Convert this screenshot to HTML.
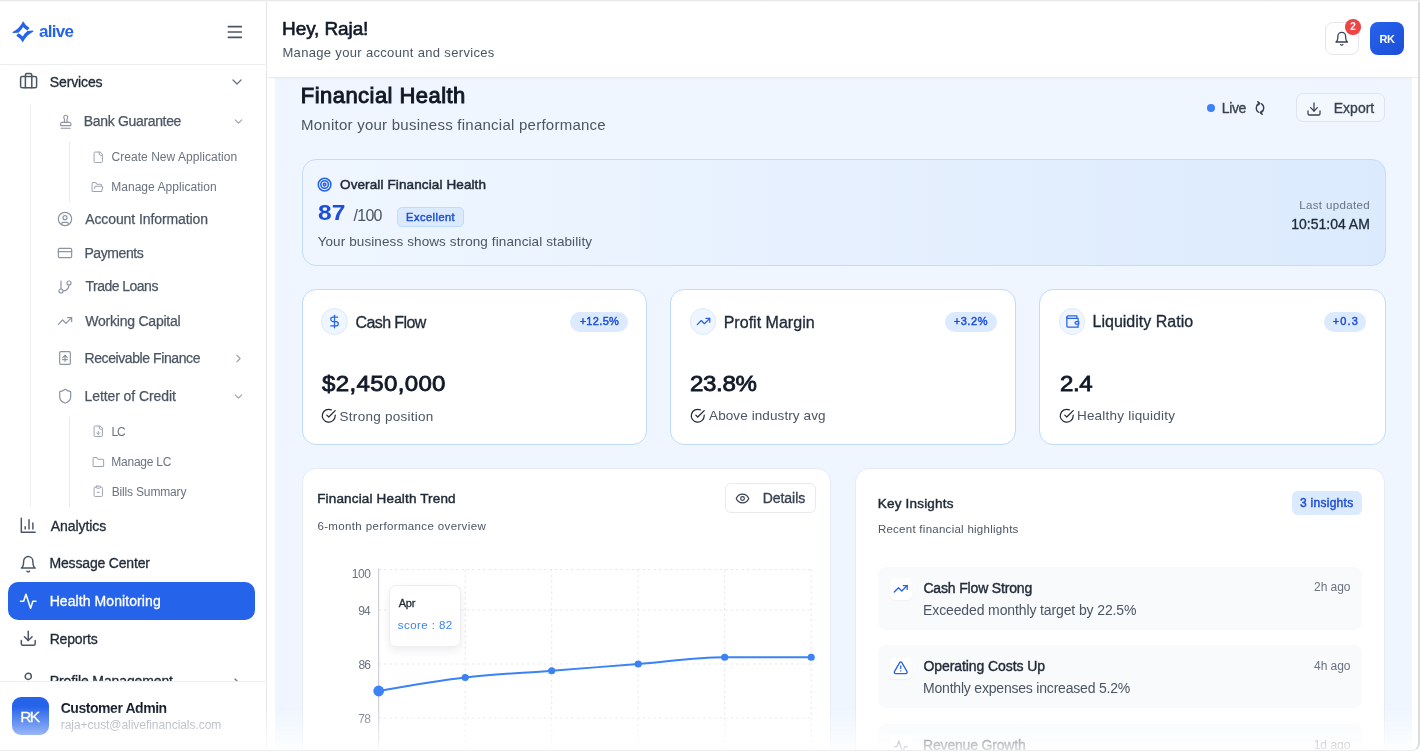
<!DOCTYPE html>
<html lang="en"><head><meta charset="utf-8"><title>Financial Health</title><style>
*{margin:0;padding:0;box-sizing:border-box}
html,body{width:1420px;height:754px;overflow:hidden;background:#fff}
body{position:relative;font-family:"Liberation Sans",Arial,sans-serif;-webkit-font-smoothing:antialiased}
.b{position:absolute}
.i{position:absolute;overflow:visible}
.t{position:absolute;white-space:nowrap;line-height:1}
#tx{position:absolute;left:0;top:0;width:1420px;height:754px;will-change:transform;z-index:5}
</style></head><body>
<div class="b" style="left:275.00px;top:78.30px;width:1136.50px;height:675.70px;background:#eff6ff;"></div>
<div class="b" style="left:267.50px;top:0.00px;width:1150.50px;height:78.00px;background:#fff;border-bottom:1px solid #e8ebef;box-shadow:0 1px 2px rgba(0,0,0,.03);"></div>
<div class="b" style="left:1325.00px;top:21.60px;width:34.00px;height:33.80px;background:#fff;border:1px solid #e5e7eb;border-radius:8px;"></div>
<svg class="i" style="left:1333.85px;top:30.85px" width="15.5" height="15.5" viewBox="0 0 24 24" fill="none" stroke="#374151" stroke-width="2" stroke-linecap="round" stroke-linejoin="round"><path d="M6 8a6 6 0 0 1 12 0c0 7 3 9 3 9H3s3-2 3-9"/><path d="M10.300 21a1.940 1.940 0 0 0 3.400 0"/></svg>
<div class="b" style="left:1345.20px;top:19.20px;width:15.60px;height:15.60px;background:#ef4444;border-radius:50%;"></div>
<div class="b" style="left:1370.00px;top:21.60px;width:34.00px;height:33.80px;background:linear-gradient(135deg,#2563eb,#1d4ed8);border-radius:8px;"></div>
<div class="b" style="left:1207.10px;top:104.30px;width:7.80px;height:7.80px;background:#3b82f6;border-radius:50%;"></div>
<svg class="i" style="left:1252.7px;top:101.1px" width="14" height="14" viewBox="-7 -7 14 14" fill="none" stroke="#374151" stroke-width="1.35" stroke-linecap="round" stroke-linejoin="round"><path d="M-1.56,4.17 A3.7,4.6 0 0 1 -0.51,-4.56"/><path d="M1.56,-4.17 A3.7,4.6 0 0 1 0.51,4.56"/><path d="M-2.31,-6.36 L-0.11,-4.56 L-2.31,-2.76"/><path d="M2.31,2.76 L0.11,4.56 L2.31,6.36"/></svg>
<div class="b" style="left:1296.00px;top:93.20px;width:88.60px;height:29.20px;border:1px solid #dfe5ee;border-radius:7px;background:rgba(255,255,255,.25);"></div>
<svg class="i" style="left:1305.70px;top:100.50px" width="16" height="16" viewBox="0 0 24 24" fill="none" stroke="#374151" stroke-width="1.9" stroke-linecap="round" stroke-linejoin="round"><path d="M21 15v4a2 2 0 0 1-2 2H5a2 2 0 0 1-2-2v-4"/><polyline points="7 10 12 15 17 10"/><line x1="12" x2="12" y1="15" y2="3"/></svg>
<div class="b" style="left:301.60px;top:158.70px;width:1084.00px;height:107.50px;border:1px solid #c4dcfd;border-radius:14px;background:linear-gradient(90deg,#eff6ff 0%,#e6f0fe 50%,#dbeafe 100%);"></div>
<svg class="i" style="left:317.40px;top:177.00px" width="15.2" height="15.2" viewBox="0 0 24 24" fill="none" stroke="#2563eb" stroke-width="2.5" stroke-linecap="round" stroke-linejoin="round"><circle cx="12" cy="12" r="10"/><circle cx="12" cy="12" r="6"/><circle cx="12" cy="12" r="2"/></svg>
<div class="b" style="left:397.00px;top:207.40px;width:66.60px;height:20.00px;border:1px solid #bfdbfe;border-radius:5px;background:#dbeafe;"></div>
<div class="b" style="left:301.60px;top:288.70px;width:345.70px;height:155.90px;border:1px solid #bfdbfe;border-radius:14px;background:#fff;"></div>
<div class="b" style="left:321.00px;top:308.40px;width:26.60px;height:26.60px;border:1px solid #dbeafe;border-radius:50%;background:#eff6ff;"></div>
<svg class="i" style="left:326.80px;top:314.20px" width="15" height="15" viewBox="0 0 24 24" fill="none" stroke="#2563eb" stroke-width="2" stroke-linecap="round" stroke-linejoin="round"><line x1="12" x2="12" y1="2" y2="22"/><path d="M17 5H9.500a3.500 3.500 0 0 0 0 7h5a3.500 3.500 0 0 1 0 7H6"/></svg>
<div class="b" style="left:569.80px;top:311.70px;width:58.00px;height:20.10px;border-radius:10px;background:#dbeafe;"></div>
<svg class="i" style="left:321.05px;top:408.25px" width="15.5" height="15.5" viewBox="0 0 24 24" fill="none" stroke="#1f2937" stroke-width="1.9" stroke-linecap="round" stroke-linejoin="round"><path d="M22 11.080V12a10 10 0 1 1-5.930-9.140"/><path d="m9 11 3 3L22 4"/></svg>
<div class="b" style="left:670.40px;top:288.70px;width:346.10px;height:155.90px;border:1px solid #bfdbfe;border-radius:14px;background:#fff;"></div>
<div class="b" style="left:689.80px;top:308.40px;width:26.60px;height:26.60px;border:1px solid #dbeafe;border-radius:50%;background:#eff6ff;"></div>
<svg class="i" style="left:695.60px;top:314.20px" width="15" height="15" viewBox="0 0 24 24" fill="none" stroke="#2563eb" stroke-width="2" stroke-linecap="round" stroke-linejoin="round"><polyline points="22 7 13.5 15.5 8.5 10.5 2 17"/><polyline points="16 7 22 7 22 13"/></svg>
<div class="b" style="left:945.00px;top:311.70px;width:51.80px;height:20.10px;border-radius:10px;background:#dbeafe;"></div>
<svg class="i" style="left:689.85px;top:408.25px" width="15.5" height="15.5" viewBox="0 0 24 24" fill="none" stroke="#1f2937" stroke-width="1.9" stroke-linecap="round" stroke-linejoin="round"><path d="M22 11.080V12a10 10 0 1 1-5.930-9.140"/><path d="m9 11 3 3L22 4"/></svg>
<div class="b" style="left:1039.40px;top:288.70px;width:346.20px;height:155.90px;border:1px solid #bfdbfe;border-radius:14px;background:#fff;"></div>
<div class="b" style="left:1058.80px;top:308.40px;width:26.60px;height:26.60px;border:1px solid #dbeafe;border-radius:50%;background:#eff6ff;"></div>
<svg class="i" style="left:1064.60px;top:314.20px" width="15" height="15" viewBox="0 0 24 24" fill="none" stroke="#2563eb" stroke-width="2" stroke-linecap="round" stroke-linejoin="round"><path d="M21 12V7H5a2 2 0 0 1 0-4h14v4"/><path d="M3 5v14a2 2 0 0 0 2 2h16v-5"/><path d="M18 12a2 2 0 0 0 0 4h4v-4Z"/></svg>
<div class="b" style="left:1324.00px;top:311.70px;width:42.00px;height:20.10px;border-radius:10px;background:#dbeafe;"></div>
<svg class="i" style="left:1058.85px;top:408.25px" width="15.5" height="15.5" viewBox="0 0 24 24" fill="none" stroke="#1f2937" stroke-width="1.9" stroke-linecap="round" stroke-linejoin="round"><path d="M22 11.080V12a10 10 0 1 1-5.930-9.140"/><path d="m9 11 3 3L22 4"/></svg>
<div class="b" style="left:301.60px;top:467.60px;width:529.90px;height:362.40px;border:1px solid #e6ecf5;border-radius:14px;background:#fff;"></div>
<div class="b" style="left:855.00px;top:467.60px;width:530.30px;height:362.40px;border:1px solid #e6ecf5;border-radius:14px;background:#fff;"></div>
<div class="b" style="left:725.00px;top:483.00px;width:90.60px;height:30.00px;border:1px solid #e8eaee;border-radius:6px;background:#fff;"></div>
<svg class="i" style="left:735.30px;top:491.10px" width="15" height="15" viewBox="0 0 24 24" fill="none" stroke="#374151" stroke-width="1.9" stroke-linecap="round" stroke-linejoin="round"><path d="M2 12s3-7 10-7 10 7 10 7-3 7-10 7-10-7-10-7Z"/><circle cx="12" cy="12" r="3"/></svg>
<svg class="i" style="left:0;top:0" width="1420" height="754" viewBox="0 0 1420 754" fill="none"><line x1="378.7" x2="811.2" y1="569.50" y2="569.50" stroke="#e6e9ee" stroke-width="1" stroke-dasharray="2.500 3"/><line x1="378.7" x2="811.2" y1="610.00" y2="610.00" stroke="#e6e9ee" stroke-width="1" stroke-dasharray="2.500 3"/><line x1="378.7" x2="811.2" y1="664.00" y2="664.00" stroke="#e6e9ee" stroke-width="1" stroke-dasharray="2.500 3"/><line x1="378.7" x2="811.2" y1="718.00" y2="718.00" stroke="#e6e9ee" stroke-width="1" stroke-dasharray="2.500 3"/><line x1="465.2" x2="465.2" y1="569.5" y2="760" stroke="#e6e9ee" stroke-width="1" stroke-dasharray="2.500 3"/><line x1="551.7" x2="551.7" y1="569.5" y2="760" stroke="#e6e9ee" stroke-width="1" stroke-dasharray="2.500 3"/><line x1="638.2" x2="638.2" y1="569.5" y2="760" stroke="#e6e9ee" stroke-width="1" stroke-dasharray="2.500 3"/><line x1="724.7" x2="724.7" y1="569.5" y2="760" stroke="#e6e9ee" stroke-width="1" stroke-dasharray="2.500 3"/><line x1="811.2" x2="811.2" y1="569.5" y2="760" stroke="#e6e9ee" stroke-width="1" stroke-dasharray="2.500 3"/><line x1="378.7" x2="378.7" y1="568.5" y2="760" stroke="#c3c7ce" stroke-width="1"/><path d="M378.70,691.00C407.53,685.94 436.37,680.88 465.20,677.50C494.03,674.12 522.87,673.00 551.70,670.75C580.53,668.50 609.37,666.25 638.20,664.00C667.03,661.75 695.87,657.25 724.70,657.25C753.53,657.25 782.37,657.25 811.20,657.25" stroke="#3b82f6" stroke-width="2"/><circle cx="378.7" cy="691.00" r="5.4" fill="#3b82f6"/><circle cx="465.2" cy="677.50" r="3.6" fill="#3b82f6"/><circle cx="551.7" cy="670.75" r="3.6" fill="#3b82f6"/><circle cx="638.2" cy="664.00" r="3.6" fill="#3b82f6"/><circle cx="724.7" cy="657.25" r="3.6" fill="#3b82f6"/><circle cx="811.2" cy="657.25" r="3.6" fill="#3b82f6"/></svg>
<div class="b" style="left:388.70px;top:585.20px;width:72.50px;height:61.40px;background:#fff;border:1px solid #eceef2;border-radius:7px;box-shadow:0 4px 10px rgba(0,0,0,.07);"></div>
<div class="b" style="left:1291.60px;top:491.00px;width:70.00px;height:24.40px;border-radius:6px;background:#dbeafe;"></div>
<div class="b" style="left:878.40px;top:566.60px;width:483.20px;height:63.00px;border-radius:8px;background:#f8fafc;"></div>
<div class="b" style="left:889.60px;top:577.70px;width:22.20px;height:22.20px;border-radius:5px;background:#fff;box-shadow:0 1px 2px rgba(0,0,0,.04);"></div>
<svg class="i" style="left:892.95px;top:581.05px" width="15.5" height="15.5" viewBox="0 0 24 24" fill="none" stroke="#2563eb" stroke-width="2" stroke-linecap="round" stroke-linejoin="round"><polyline points="22 7 13.5 15.5 8.5 10.5 2 17"/><polyline points="16 7 22 7 22 13"/></svg>
<div class="b" style="left:878.40px;top:645.40px;width:483.20px;height:63.00px;border-radius:8px;background:#f8fafc;"></div>
<div class="b" style="left:889.60px;top:656.50px;width:22.20px;height:22.20px;border-radius:5px;background:#fff;box-shadow:0 1px 2px rgba(0,0,0,.04);"></div>
<svg class="i" style="left:892.95px;top:659.85px" width="15.5" height="15.5" viewBox="0 0 24 24" fill="none" stroke="#2563eb" stroke-width="2" stroke-linecap="round" stroke-linejoin="round"><path d="m21.730 18-8-14a2 2 0 0 0-3.480 0l-8 14A2 2 0 0 0 4 21h16a2 2 0 0 0 1.730-3Z"/><path d="M12 9v4"/><path d="M12 17h.01"/></svg>
<div class="b" style="left:878.40px;top:724.10px;width:483.20px;height:63.00px;border-radius:8px;background:#f8fafc;"></div>
<div class="b" style="left:889.60px;top:735.20px;width:22.20px;height:22.20px;border-radius:5px;background:#fff;box-shadow:0 1px 2px rgba(0,0,0,.04);"></div>
<svg class="i" style="left:892.95px;top:738.55px" width="15.5" height="15.5" viewBox="0 0 24 24" fill="none" stroke="#6b7280" stroke-width="2" stroke-linecap="round" stroke-linejoin="round"><path d="M22 12h-4l-3 9L9 3l-3 9H2"/></svg>
<div class="b" style="left:1411.50px;top:78.00px;width:6.50px;height:676.00px;background:#fff;"></div>
<div class="b" style="left:0.00px;top:0.00px;width:267.00px;height:754.00px;background:#fff;border-right:1px solid #e5e7eb;"></div>
<div class="b" style="left:0.00px;top:64.00px;width:266.50px;height:1.00px;background:#eceef1;"></div>
<svg class="i" style="left:0;top:0" width="50" height="50" viewBox="0 0 50 50" fill="#2563eb"><path d="M12.3,32.2 Q19.3,28.800 23.1,21.200 Q25.4,25.600 29.5,27.900 L27.3,30.400 Q24.7,29.100 23.1,27.100 Q21.3,30.300 18.4,32.700 L13,33.100 Z"/><path d="M12.3,32.2 Q19.3,28.800 23.1,21.200 Q25.4,25.600 29.5,27.900 L27.3,30.400 Q24.7,29.100 23.1,27.100 Q21.3,30.300 18.4,32.700 L13,33.100 Z" transform="rotate(180 22.9 31.85)"/></svg>
<svg class="i" style="left:226px;top:24px" width="18" height="16" viewBox="0 0 18 16" fill="none" stroke="#4b5563" stroke-width="1.700" stroke-linecap="round"><line x1="2.400" x2="15.300" y1="2.700" y2="2.700"/><line x1="2.400" x2="15.300" y1="8" y2="8"/><line x1="2.400" x2="15.300" y1="13.300" y2="13.300"/></svg>
<div class="b" style="left:30.00px;top:104.00px;width:1.00px;height:402.50px;background:#eff0f2;"></div>
<div class="b" style="left:69.00px;top:142.00px;width:1.00px;height:59.60px;background:#e7e9ec;"></div>
<div class="b" style="left:69.00px;top:416.60px;width:1.00px;height:90.40px;background:#e7e9ec;"></div>
<svg class="i" style="left:18.90px;top:71.20px" width="19.2" height="19.2" viewBox="0 0 24 24" fill="none" stroke="#4b5563" stroke-width="1.9" stroke-linecap="round" stroke-linejoin="round"><rect width="20" height="14" x="2" y="7" rx="2" ry="2"/><path d="M16 21V5a2 2 0 0 0-2-2h-4a2 2 0 0 0-2 2v16"/></svg>
<svg class="i" style="left:229.00px;top:74.00px" width="16" height="16" viewBox="0 0 24 24" fill="none" stroke="#6b7280" stroke-width="1.9" stroke-linecap="round" stroke-linejoin="round"><path d="m6 9 6 6 6-6"/></svg>
<svg class="i" style="left:57.55px;top:113.75px" width="15.5" height="15.5" viewBox="0 0 24 24" fill="none" stroke="#8d95a3" stroke-width="1.8" stroke-linecap="round" stroke-linejoin="round"><path d="M5 22h14"/><path d="M19.27 13.73A2.5 2.5 0 0 0 17.5 13h-11A2.5 2.5 0 0 0 4 15.5V17a1 1 0 0 0 1 1h14a1 1 0 0 0 1-1v-1.5c0-.66-.26-1.3-.73-1.77Z"/><path d="M14 13V8.5C14 7 15 7 15 5a3 3 0 0 0-3-3c-1.66 0-3 1-3 3s1 2 1 3.500V13"/></svg>
<svg class="i" style="left:231.70px;top:114.80px" width="13" height="13" viewBox="0 0 24 24" fill="none" stroke="#9ca3af" stroke-width="2" stroke-linecap="round" stroke-linejoin="round"><path d="m6 9 6 6 6-6"/></svg>
<svg class="i" style="left:92.05px;top:150.55px" width="12.5" height="12.5" viewBox="0 0 24 24" fill="none" stroke="#9ca3af" stroke-width="1.9" stroke-linecap="round" stroke-linejoin="round"><path d="M15 2H6a2 2 0 0 0-2 2v16a2 2 0 0 0 2 2h12a2 2 0 0 0 2-2V7Z"/><path d="M14 2v4a2 2 0 0 0 2 2h4"/></svg>
<svg class="i" style="left:91.45px;top:180.65px" width="12.7" height="12.7" viewBox="0 0 24 24" fill="none" stroke="#9ca3af" stroke-width="1.9" stroke-linecap="round" stroke-linejoin="round"><path d="m6 14 1.5-2.900A2 2 0 0 1 9.240 10H20a2 2 0 0 1 1.940 2.500l-1.540 6a2 2 0 0 1-1.950 1.500H4a2 2 0 0 1-2-2V5a2 2 0 0 1 2-2h3.900a2 2 0 0 1 1.690.900l.810 1.200a2 2 0 0 0 1.670.900H18a2 2 0 0 1 2 2v2"/></svg>
<svg class="i" style="left:57.20px;top:211.00px" width="16" height="16" viewBox="0 0 24 24" fill="none" stroke="#8d95a3" stroke-width="1.8" stroke-linecap="round" stroke-linejoin="round"><circle cx="12" cy="12" r="10"/><circle cx="12" cy="10" r="3"/><path d="M7 20.662V19a2 2 0 0 1 2-2h6a2 2 0 0 1 2 2v1.662"/></svg>
<svg class="i" style="left:57.00px;top:245.00px" width="16" height="16" viewBox="0 0 24 24" fill="none" stroke="#8d95a3" stroke-width="1.8" stroke-linecap="round" stroke-linejoin="round"><rect width="20" height="14" x="2" y="5" rx="2"/><line x1="2" x2="22" y1="10" y2="10"/></svg>
<svg class="i" style="left:57.30px;top:278.80px" width="16" height="16" viewBox="0 0 24 24" fill="none" stroke="#8d95a3" stroke-width="1.8" stroke-linecap="round" stroke-linejoin="round"><line x1="6" x2="6" y1="3" y2="15"/><circle cx="18" cy="6" r="3"/><circle cx="6" cy="18" r="3"/><path d="M18 9a9 9 0 0 1-9 9"/></svg>
<svg class="i" style="left:57.20px;top:312.80px" width="16" height="16" viewBox="0 0 24 24" fill="none" stroke="#8d95a3" stroke-width="1.8" stroke-linecap="round" stroke-linejoin="round"><polyline points="22 7 13.5 15.5 8.5 10.5 2 17"/><polyline points="16 7 22 7 22 13"/></svg>
<svg class="i" style="left:57.00px;top:350.40px" width="16" height="16" viewBox="0 0 24 24" fill="none" stroke="#8d95a3" stroke-width="1.8" stroke-linecap="round" stroke-linejoin="round"><rect x="4" y="2.500" width="16" height="19" rx="1.500"/><path d="M12 17V8"/><path d="m8.500 11.500 3.500-3.500 3.500 3.500"/><path d="M8.500 14.500h7"/></svg>
<svg class="i" style="left:231.80px;top:352.00px" width="13" height="13" viewBox="0 0 24 24" fill="none" stroke="#9ca3af" stroke-width="2" stroke-linecap="round" stroke-linejoin="round"><path d="m9 18 6-6-6-6"/></svg>
<svg class="i" style="left:57.00px;top:388.20px" width="16.4" height="16.4" viewBox="0 0 24 24" fill="none" stroke="#8d95a3" stroke-width="1.8" stroke-linecap="round" stroke-linejoin="round"><path d="M20 13c0 5-3.500 7.500-7.660 8.950a1 1 0 0 1-.670-.010C7.500 20.500 4 18 4 13V6a1 1 0 0 1 1-1c2 0 4.500-1.200 6.240-2.720a1.170 1.170 0 0 1 1.520 0C14.510 3.810 17 5 19 5a1 1 0 0 1 1 1z"/></svg>
<svg class="i" style="left:232.00px;top:389.50px" width="13" height="13" viewBox="0 0 24 24" fill="none" stroke="#9ca3af" stroke-width="2" stroke-linecap="round" stroke-linejoin="round"><path d="m6 9 6 6 6-6"/></svg>
<svg class="i" style="left:92.05px;top:425.45px" width="12.5" height="12.5" viewBox="0 0 24 24" fill="none" stroke="#9ca3af" stroke-width="1.9" stroke-linecap="round" stroke-linejoin="round"><path d="M15 2H6a2 2 0 0 0-2 2v16a2 2 0 0 0 2 2h12a2 2 0 0 0 2-2V7Z"/><path d="M14 2v4a2 2 0 0 0 2 2h4"/><path d="M12 18v-6"/><path d="m9 15 3 3 3-3"/></svg>
<svg class="i" style="left:91.65px;top:455.65px" width="12.7" height="12.7" viewBox="0 0 24 24" fill="none" stroke="#9ca3af" stroke-width="1.9" stroke-linecap="round" stroke-linejoin="round"><path d="M20 20a2 2 0 0 0 2-2V8a2 2 0 0 0-2-2h-7.900a2 2 0 0 1-1.690-.900L9.600 3.900A2 2 0 0 0 7.930 3H4a2 2 0 0 0-2 2v13a2 2 0 0 0 2 2Z"/></svg>
<svg class="i" style="left:92.05px;top:485.45px" width="12.5" height="12.5" viewBox="0 0 24 24" fill="none" stroke="#9ca3af" stroke-width="1.9" stroke-linecap="round" stroke-linejoin="round"><rect width="8" height="4" x="8" y="2" rx="1" ry="1"/><path d="M16 4h2a2 2 0 0 1 2 2v14a2 2 0 0 1-2 2H6a2 2 0 0 1-2-2V6a2 2 0 0 1 2-2h2"/><path d="M10 14h4"/></svg>
<svg class="i" style="left:19.45px;top:516.25px" width="18.5" height="18.5" viewBox="0 0 24 24" fill="none" stroke="#4b5563" stroke-width="1.9" stroke-linecap="round" stroke-linejoin="round"><path d="M3 3v18h18"/><path d="M18 17V9"/><path d="M13 17V5"/><path d="M8 17v-3"/></svg>
<svg class="i" style="left:19.45px;top:554.55px" width="18.5" height="18.5" viewBox="0 0 24 24" fill="none" stroke="#4b5563" stroke-width="1.9" stroke-linecap="round" stroke-linejoin="round"><path d="M6 8a6 6 0 0 1 12 0c0 7 3 9 3 9H3s3-2 3-9"/><path d="M10.300 21a1.940 1.940 0 0 0 3.400 0"/></svg>
<div class="b" style="left:8.00px;top:582.40px;width:247.00px;height:37.20px;background:#2563eb;border-radius:10px;"></div>
<svg class="i" style="left:19.45px;top:591.75px" width="18.5" height="18.5" viewBox="0 0 24 24" fill="none" stroke="#fff" stroke-width="2" stroke-linecap="round" stroke-linejoin="round"><path d="M22 12h-4l-3 9L9 3l-3 9H2"/></svg>
<svg class="i" style="left:19.45px;top:629.45px" width="18.5" height="18.5" viewBox="0 0 24 24" fill="none" stroke="#4b5563" stroke-width="1.9" stroke-linecap="round" stroke-linejoin="round"><path d="M21 15v4a2 2 0 0 1-2 2H5a2 2 0 0 1-2-2v-4"/><polyline points="7 10 12 15 17 10"/><line x1="12" x2="12" y1="15" y2="3"/></svg>
<svg class="i" style="left:19.45px;top:671.35px" width="18.5" height="18.5" viewBox="0 0 24 24" fill="none" stroke="#4b5563" stroke-width="1.9" stroke-linecap="round" stroke-linejoin="round"><path d="M19 21v-2a4 4 0 0 0-4-4H9a4 4 0 0 0-4 4v2"/><circle cx="12" cy="7" r="4"/></svg>
<svg class="i" style="left:229.00px;top:675.00px" width="16" height="16" viewBox="0 0 24 24" fill="none" stroke="#6b7280" stroke-width="1.9" stroke-linecap="round" stroke-linejoin="round"><path d="m9 18 6-6-6-6"/></svg>
<div class="b" style="left:0.00px;top:681.00px;width:266.00px;height:73.00px;background:#fff;border-top:1px solid #eceef1;z-index:2;"></div>
<div class="b" style="left:11.60px;top:697.30px;width:37.40px;height:37.40px;background:#2563eb;border-radius:9px;z-index:3;"></div>
<div id="tx">
<span class="t" id="t0" style="left:39.08px;top:23.41px;font-size:17px;color:#2563eb;font-weight:700;letter-spacing:-0.732px;">alive</span>
<span class="t" id="t1" style="left:49.82px;top:75.25px;font-size:14px;color:#1f2937;letter-spacing:-0.137px;-webkit-text-stroke:0.32px;">Services</span>
<span class="t" id="t2" style="left:83.86px;top:114.15px;font-size:14px;color:#4b5563;letter-spacing:-0.341px;-webkit-text-stroke:0.25px;">Bank Guarantee</span>
<span class="t" id="t3" style="left:111.46px;top:150.84px;font-size:12px;color:#6b7280;letter-spacing:0.050px;">Create New Application</span>
<span class="t" id="t4" style="left:111.18px;top:180.97px;font-size:12px;color:#6b7280;letter-spacing:0.042px;">Manage Application</span>
<span class="t" id="t5" style="left:85.17px;top:211.82px;font-size:14px;color:#4b5563;letter-spacing:-0.092px;-webkit-text-stroke:0.25px;">Account Information</span>
<span class="t" id="t6" style="left:84.46px;top:245.56px;font-size:14px;color:#4b5563;letter-spacing:-0.428px;-webkit-text-stroke:0.25px;">Payments</span>
<span class="t" id="t7" style="left:85.55px;top:278.81px;font-size:14px;color:#4b5563;letter-spacing:-0.525px;-webkit-text-stroke:0.25px;">Trade Loans</span>
<span class="t" id="t8" style="left:85.31px;top:313.80px;font-size:14px;color:#4b5563;letter-spacing:-0.227px;-webkit-text-stroke:0.25px;">Working Capital</span>
<span class="t" id="t9" style="left:84.47px;top:351.15px;font-size:14px;color:#4b5563;letter-spacing:-0.411px;-webkit-text-stroke:0.25px;">Receivable Finance</span>
<span class="t" id="t10" style="left:84.48px;top:389.15px;font-size:14px;color:#4b5563;letter-spacing:-0.078px;-webkit-text-stroke:0.25px;">Letter of Credit</span>
<span class="t" id="t11" style="left:111.56px;top:425.84px;font-size:12px;color:#6b7280;letter-spacing:-1.107px;">LC</span>
<span class="t" id="t12" style="left:111.32px;top:455.84px;font-size:12px;color:#6b7280;letter-spacing:-0.255px;">Manage LC</span>
<span class="t" id="t13" style="left:111.64px;top:485.84px;font-size:12px;color:#6b7280;letter-spacing:-0.156px;">Bills Summary</span>
<span class="t" id="t14" style="left:50.63px;top:519.15px;font-size:14px;color:#1f2937;letter-spacing:-0.048px;-webkit-text-stroke:0.32px;">Analytics</span>
<span class="t" id="t15" style="left:49.52px;top:556.17px;font-size:14px;color:#1f2937;letter-spacing:-0.174px;-webkit-text-stroke:0.32px;">Message Center</span>
<span class="t" id="t16" style="left:49.68px;top:594.15px;font-size:14px;color:#ffffff;letter-spacing:0.080px;-webkit-text-stroke:0.32px;">Health Monitoring</span>
<span class="t" id="t17" style="left:49.67px;top:631.55px;font-size:14px;color:#1f2937;letter-spacing:-0.161px;-webkit-text-stroke:0.32px;">Reports</span>
<span class="t" id="t18" style="left:49.74px;top:674.15px;font-size:14px;color:#1f2937;letter-spacing:-0.119px;-webkit-text-stroke:0.32px;clip-path:inset(0 0 7.15px 0);">Profile Management</span>
<span class="t" id="t19" style="left:60.71px;top:701.15px;font-size:14px;color:#111827;font-weight:700;letter-spacing:-0.449px;">Customer Admin</span>
<span class="t" id="t20" style="left:60.80px;top:718.84px;font-size:12px;color:#9ca3af;letter-spacing:-0.051px;">raja+cust@alivefinancials.com</span>
<span class="t" id="t21" style="left:20.30px;top:709.11px;font-size:15.5px;color:#ffffff;letter-spacing:-1.735px;-webkit-text-stroke:0.32px;">RK</span>
<span class="t" id="t22" style="left:282.07px;top:18.82px;font-size:19px;color:#111827;letter-spacing:-0.109px;-webkit-text-stroke:0.6px;">Hey, Raja!</span>
<span class="t" id="t23" style="left:282.41px;top:46.04px;font-size:13px;color:#4b5563;letter-spacing:0.333px;">Manage your account and services</span>
<span class="t" id="t24" style="left:1350.33px;top:22.34px;font-size:10px;color:#ffffff;font-weight:700;letter-spacing:10.457px;">2</span>
<span class="t" id="t25" style="left:1379.56px;top:33.53px;font-size:11px;color:#ffffff;font-weight:700;letter-spacing:-0.424px;">RK</span>
<span class="t" id="t26" style="left:300.83px;top:84.91px;font-size:22px;color:#111827;letter-spacing:0.452px;-webkit-text-stroke:0.95px;">Financial Health</span>
<span class="t" id="t27" style="left:300.97px;top:117.30px;font-size:15px;color:#4b5563;letter-spacing:0.247px;">Monitor your business financial performance</span>
<span class="t" id="t28" style="left:1221.82px;top:101.15px;font-size:14px;color:#374151;letter-spacing:-0.369px;-webkit-text-stroke:0.32px;">Live</span>
<span class="t" id="t29" style="left:1333.76px;top:101.15px;font-size:14px;color:#374151;letter-spacing:0.008px;-webkit-text-stroke:0.32px;">Export</span>
<span class="t" id="t30" style="left:340.02px;top:177.57px;font-size:13.5px;color:#1f2937;letter-spacing:0.116px;-webkit-text-stroke:0.5px;">Overall Financial Health</span>
<span class="t" id="t31" style="left:317.81px;top:201.92px;font-size:22.3px;color:#1d4ed8;font-weight:700;letter-spacing:0.135px;transform:scaleX(1.1);transform-origin:0 0;">87</span>
<span class="t" id="t32" style="left:353.47px;top:208.26px;font-size:16px;color:#4b5563;letter-spacing:-0.696px;">/100</span>
<span class="t" id="t33" style="left:406.07px;top:212.09px;font-size:11px;color:#1d4ed8;letter-spacing:0.497px;-webkit-text-stroke:0.45px;">Excellent</span>
<span class="t" id="t34" style="left:317.63px;top:234.88px;font-size:13.5px;color:#4b5563;letter-spacing:0.106px;">Your business shows strong financial stability</span>
<span class="t" id="t35" style="left:1299.16px;top:200.27px;font-size:11.5px;color:#6b7280;letter-spacing:0.364px;">Last updated</span>
<span class="t" id="t36" style="left:1291.21px;top:217.15px;font-size:14px;color:#1f2937;letter-spacing:0.004px;-webkit-text-stroke:0.32px;">10:51:04 AM</span>
<span class="t" id="t37" style="left:355.44px;top:314.53px;font-size:16px;color:#1f2937;letter-spacing:-0.580px;-webkit-text-stroke:0.32px;">Cash Flow</span>
<span class="t" id="t38" style="left:579.64px;top:315.89px;font-size:11px;color:#1d4ed8;letter-spacing:0.322px;-webkit-text-stroke:0.45px;">+12.5%</span>
<span class="t" id="t39" style="left:322.09px;top:373.43px;font-size:22.3px;color:#111827;letter-spacing:0.306px;-webkit-text-stroke:0.8px;transform:scaleX(1.08);transform-origin:0 0;">$2,450,000</span>
<span class="t" id="t40" style="left:339.60px;top:409.81px;font-size:13.5px;color:#4b5563;letter-spacing:0.261px;">Strong position</span>
<span class="t" id="t41" style="left:723.68px;top:314.61px;font-size:16px;color:#1f2937;letter-spacing:0.020px;-webkit-text-stroke:0.32px;">Profit Margin</span>
<span class="t" id="t42" style="left:953.65px;top:315.89px;font-size:11px;color:#1d4ed8;letter-spacing:0.570px;-webkit-text-stroke:0.45px;">+3.2%</span>
<span class="t" id="t43" style="left:690.41px;top:373.43px;font-size:22.3px;color:#111827;letter-spacing:-0.331px;-webkit-text-stroke:0.8px;transform:scaleX(1.08);transform-origin:0 0;">23.8%</span>
<span class="t" id="t44" style="left:709.07px;top:409.28px;font-size:13.5px;color:#4b5563;letter-spacing:0.095px;">Above industry avg</span>
<span class="t" id="t45" style="left:1092.55px;top:314.23px;font-size:16px;color:#1f2937;letter-spacing:0.003px;-webkit-text-stroke:0.32px;">Liquidity Ratio</span>
<span class="t" id="t46" style="left:1332.65px;top:315.89px;font-size:11px;color:#1d4ed8;letter-spacing:1.189px;-webkit-text-stroke:0.45px;">+0.3</span>
<span class="t" id="t47" style="left:1059.51px;top:373.43px;font-size:22.3px;color:#111827;letter-spacing:-0.379px;-webkit-text-stroke:0.8px;transform:scaleX(1.08);transform-origin:0 0;">2.4</span>
<span class="t" id="t48" style="left:1076.93px;top:409.36px;font-size:13.5px;color:#4b5563;letter-spacing:0.219px;">Healthy liquidity</span>
<span class="t" id="t49" style="left:317.23px;top:491.57px;font-size:13.5px;color:#1f2937;letter-spacing:0.158px;-webkit-text-stroke:0.45px;">Financial Health Trend</span>
<span class="t" id="t50" style="left:317.42px;top:521.42px;font-size:11.5px;color:#4b5563;letter-spacing:0.362px;">6-month performance overview</span>
<span class="t" id="t51" style="left:762.67px;top:490.86px;font-size:14px;color:#374151;letter-spacing:-0.032px;-webkit-text-stroke:0.32px;">Details</span>
<span class="t" id="t52" style="left:351.85px;top:567.64px;font-size:12px;color:#6b7280;letter-spacing:-0.420px;">100</span>
<span class="t" id="t53" style="left:358.32px;top:605.16px;font-size:12px;color:#6b7280;letter-spacing:-0.868px;">94</span>
<span class="t" id="t54" style="left:358.41px;top:658.64px;font-size:12px;color:#6b7280;letter-spacing:-0.717px;">86</span>
<span class="t" id="t55" style="left:358.35px;top:712.64px;font-size:12px;color:#6b7280;letter-spacing:-0.713px;">78</span>
<span class="t" id="t56" style="left:398.68px;top:598.34px;font-size:11px;color:#1f2937;letter-spacing:-0.173px;-webkit-text-stroke:0.32px;">Apr</span>
<span class="t" id="t57" style="left:397.83px;top:619.97px;font-size:11.5px;color:#3b82f6;letter-spacing:0.437px;">score : 82</span>
<span class="t" id="t58" style="left:877.83px;top:496.57px;font-size:13.5px;color:#1f2937;letter-spacing:0.183px;-webkit-text-stroke:0.45px;">Key Insights</span>
<span class="t" id="t59" style="left:877.89px;top:523.60px;font-size:11.5px;color:#4b5563;letter-spacing:0.264px;">Recent financial highlights</span>
<span class="t" id="t60" style="left:1299.99px;top:497.43px;font-size:12px;color:#1d4ed8;letter-spacing:0.277px;-webkit-text-stroke:0.45px;">3 insights</span>
<span class="t" id="t61" style="left:923.41px;top:580.64px;font-size:14px;color:#1f2937;letter-spacing:-0.161px;-webkit-text-stroke:0.4px;">Cash Flow Strong</span>
<span class="t" id="t62" style="left:923.04px;top:603.15px;font-size:14px;color:#4b5563;letter-spacing:-0.120px;">Exceeded monthly target by 22.5%</span>
<span class="t" id="t63" style="left:1314.02px;top:580.84px;font-size:12px;color:#6b7280;letter-spacing:-0.056px;">2h ago</span>
<span class="t" id="t64" style="left:923.53px;top:659.35px;font-size:14px;color:#1f2937;letter-spacing:-0.087px;-webkit-text-stroke:0.4px;">Operating Costs Up</span>
<span class="t" id="t65" style="left:923.00px;top:680.95px;font-size:14px;color:#4b5563;letter-spacing:-0.199px;">Monthly expenses increased 5.2%</span>
<span class="t" id="t66" style="left:1314.02px;top:659.84px;font-size:12px;color:#6b7280;letter-spacing:-0.053px;">4h ago</span>
<span class="t" id="t67" style="left:923.11px;top:738.15px;font-size:14px;color:#1f2937;letter-spacing:-0.191px;-webkit-text-stroke:0.4px;">Revenue Growth</span>
<span class="t" id="t68" style="left:1313.69px;top:738.64px;font-size:12px;color:#6b7280;letter-spacing:0.012px;">1d ago</span>
</div>
<div class="b" style="left:0.00px;top:706.00px;width:1420.00px;height:44.00px;z-index:9;background:linear-gradient(to bottom,rgba(255,255,255,0) 0%,rgba(255,255,255,.82) 100%);"></div>
<div class="b" style="left:0.00px;top:749.50px;width:1420.00px;height:4.50px;z-index:9;background:#fff;"></div>
<div class="b" style="left:-10.00px;top:-10.00px;width:1430.00px;height:761.40px;z-index:9;border-right:2px solid #dcdcdc;border-bottom:1.400px solid #ededed;border-bottom-right-radius:8px;border-bottom-left-radius:0;"></div>
<div class="b" style="left:0.00px;top:0.00px;width:1420.00px;height:2.40px;z-index:9;background:linear-gradient(to bottom,#e6e6e6 0%,#ebebeb 40%,#fafafa 85%,#fff 100%);"></div>
</body></html>
